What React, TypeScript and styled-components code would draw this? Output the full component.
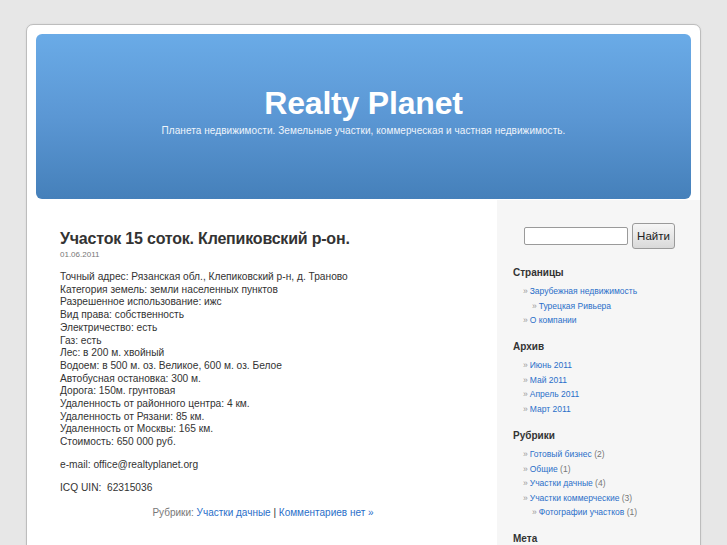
import styled, { createGlobalStyle } from 'styled-components';

const GlobalStyle = createGlobalStyle`
  body {
    margin: 0;
    background: #e7e7e7;
    font-family: "Liberation Sans", Arial, sans-serif;
    color: #333;
  }
`;

const Page = styled.div`
  width: 673px;
  margin: 24px 0 0 26px;
  padding-top: 9px;
  background: #fff;
  border: 1px solid #bdbdbd;
  border-radius: 7px 7px 0 0;
  box-shadow: 0 0 2px rgba(0, 0, 0, 0.08);
`;

const Header = styled.header`
  margin: 0 9px;
  height: 165px;
  border-radius: 6px;
  background: linear-gradient(to bottom, #6aabe7 0%, #5b97d4 50%, #4580ba 100%);
  display: flex;
  flex-direction: column;
  align-items: center;
  color: #fff;
`;

const SiteTitle = styled.h1`
  margin: 50px 0 0;
  font-size: 32px;
  line-height: 38px;
  font-weight: bold;
  letter-spacing: -0.2px;
`;

const Tagline = styled.div`
  margin-top: 2px;
  font-size: 10px;
  line-height: 14px;
  letter-spacing: 0.07px;
  color: #eef4fb;
`;

const Body = styled.div`
  display: flex;
`;

const Main = styled.main`
  width: 406px;
  padding: 30px 31px 40px 33px;
`;

const PostTitle = styled.h2`
  margin: 0;
  font-size: 16px;
  line-height: 20px;
  font-weight: bold;
  letter-spacing: -0.2px;
  color: #333;
`;

const PostDate = styled.div`
  margin-top: 1px;
  font-size: 8px;
  line-height: 10px;
  color: #777;
`;

const Entry = styled.div`
  margin-top: 11px;
  font-size: 10.2px;
  line-height: 12.7px;
`;

const Para = styled.p`
  margin: 0 0 10px;
`;

const Meta = styled.p`
  margin: 12px 0 0;
  text-align: center;
  font-size: 10px;
  line-height: 13px;
  color: #777;
`;

const Link = styled.a`
  color: #2a6fc9;
  text-decoration: none;
`;

const Sep = styled.span`
  color: #333;
`;

const Sidebar = styled.aside`
  width: 187px;
  margin-top: 1px;
  padding: 23px 0 0 16px;
  background: #f6f6f6;
`;

const SearchForm = styled.form`
  display: flex;
  align-items: center;
  gap: 4px;
  margin-left: 11px;
  margin-bottom: 17px;
`;

const SearchInput = styled.input`
  box-sizing: border-box;
  width: 104px;
  height: 18px;
  border: 1px solid #9a9a9a;
  border-radius: 2px;
  background: #fff;
  padding: 0 3px;
`;

const SearchButton = styled.button`
  box-sizing: border-box;
  width: 43px;
  height: 26px;
  border: 1px solid #9a9a9a;
  border-radius: 3px;
  background: linear-gradient(to bottom, #f6f6f6, #d9d9d9);
  font-family: "Liberation Sans", Arial, sans-serif;
  font-size: 11.5px;
  color: #222;
  padding: 0;
`;

const WidgetTitle = styled.h3`
  margin: 0;
  font-size: 10px;
  line-height: 14px;
  font-weight: bold;
  color: #333;
`;

const WidgetList = styled.ul`
  list-style: none;
  margin: 4px 0 12.75px;
  padding: 0;
`;

const Item = styled.li<{ $level?: number }>`
  font-size: 8.5px;
  line-height: 14.5px;
  color: #777;
  padding-left: ${p => 10 + (p.$level ?? 0) * 9}px;

  &::before {
    content: "»";
    margin-right: 2px;
    color: #999;
  }
`;

interface Entry {
  title: string;
  count?: number;
  level?: number;
}

const pages: Entry[] = [
  { title: 'Зарубежная недвижимость' },
  { title: 'Турецкая Ривьера', level: 1 },
  { title: 'О компании' },
];

const archive: Entry[] = [
  { title: 'Июнь 2011' },
  { title: 'Май 2011' },
  { title: 'Апрель 2011' },
  { title: 'Март 2011' },
];

const rubrics: Entry[] = [
  { title: 'Готовый бизнес', count: 2 },
  { title: 'Общие', count: 1 },
  { title: 'Участки дачные', count: 4 },
  { title: 'Участки коммерческие', count: 3 },
  { title: 'Фотографии участков', count: 1, level: 1 },
];

const details = [
  'Точный адрес: Рязанская обл., Клепиковский р-н, д. Траново',
  'Категория земель: земли населенных пунктов',
  'Разрешенное использование: ижс',
  'Вид права: собственность',
  'Электричество: есть',
  'Газ: есть',
  'Лес: в 200 м. хвойный',
  'Водоем: в 500 м. оз. Великое, 600 м. оз. Белое',
  'Автобусная остановка: 300 м.',
  'Дорога: 150м. грунтовая',
  'Удаленность от районного центра: 4 км.',
  'Удаленность от Рязани: 85 км.',
  'Удаленность от Москвы: 165 км.',
  'Стоимость: 650 000 руб.',
];

function Widget({ title, items }: { title: string; items: Entry[] }) {
  return (
    <>
      <WidgetTitle>{title}</WidgetTitle>
      <WidgetList>
        {items.map(it => (
          <Item key={it.title} $level={it.level}>
            <Link href="#">{it.title}</Link>
            {it.count !== undefined && <> ({it.count})</>}
          </Item>
        ))}
      </WidgetList>
    </>
  );
}

export default function App() {
  return (
    <>
      <GlobalStyle />
      <Page>
        <Header>
          <SiteTitle>Realty Planet</SiteTitle>
          <Tagline>Планета недвижимости. Земельные участки, коммерческая и частная недвижимость.</Tagline>
        </Header>
        <Body>
          <Main>
            <PostTitle>Участок 15 соток. Клепиковский р-он.</PostTitle>
            <PostDate>01.06.2011</PostDate>
            <Entry>
              <Para>
                {details.map((line, i) => (
                  <span key={i}>
                    {line}
                    <br />
                  </span>
                ))}
              </Para>
              <Para>e-mail: office@realtyplanet.org</Para>
              <Para>ICQ UIN:&nbsp; 62315036</Para>
            </Entry>
            <Meta>
              Рубрики: <Link href="#">Участки дачные</Link> <Sep>|</Sep>{' '}
              <Link href="#">Комментариев нет »</Link>
            </Meta>
          </Main>
          <Sidebar>
            <SearchForm onSubmit={e => e.preventDefault()}>
              <SearchInput type="text" />
              <SearchButton type="submit">Найти</SearchButton>
            </SearchForm>
            <Widget title="Страницы" items={pages} />
            <Widget title="Архив" items={archive} />
            <Widget title="Рубрики" items={rubrics} />
            <WidgetTitle>Мета</WidgetTitle>
          </Sidebar>
        </Body>
      </Page>
    </>
  );
}
